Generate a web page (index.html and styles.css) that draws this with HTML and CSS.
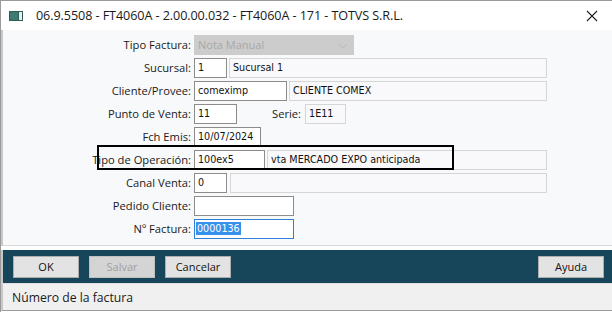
FILE: index.html
```html
<!DOCTYPE html>
<html>
<head>
<meta charset="utf-8">
<link rel="stylesheet" href="styles.css">
</head>
<body>
<div class="window">
  <div class="titlebar">
    <svg class="appicon" width="14" height="10" viewBox="0 0 14 10">
      <rect x="0" y="0" width="14" height="10" fill="#2f5f5a"/>
      <rect x="1" y="1" width="8" height="8" fill="#3e7a72"/>
      <rect x="10" y="1" width="3" height="8" fill="#e8ecea"/>
    </svg>
    <span class="title">06.9.5508 - FT4060A - 2.00.00.032 - FT4060A - 171 - TOTVS S.R.L.</span>
    <svg class="close" width="12" height="12" viewBox="0 0 12 12">
      <path d="M1 1 L11 11 M11 1 L1 11" stroke="#222" stroke-width="1.1" fill="none"/>
    </svg>
  </div>
  <div class="content">
    <div class="row">
      <span class="label">Tipo Factura:</span>
      <div class="field disabled w160">Nota Manual
        <svg class="chev" width="10" height="6" viewBox="0 0 10 6"><path d="M1 1 L5 5 L9 1" stroke="#b8b8b8" fill="none"/></svg>
      </div>
    </div>
    <div class="row">
      <span class="label">Sucursal:</span>
      <div class="field w33">1</div>
      <div class="field light grow">Sucursal 1</div>
    </div>
    <div class="row">
      <span class="label">Cliente/Provee:</span>
      <div class="field w93">comeximp</div>
      <div class="field light grow">CLIENTE COMEX</div>
    </div>
    <div class="row">
      <span class="label">Punto de Venta:</span>
      <div class="field w43">11</div>
      <span class="sublabel">Serie:</span>
      <div class="field light w41">1E11</div>
    </div>
    <div class="row">
      <span class="label">Fch Emis:</span>
      <div class="field w67">10/07/2024</div>
    </div>
    <div class="row highlight-row">
      <span class="label">Tipo de Operación:</span>
      <div class="field w71">100ex5</div>
      <div class="field light grow">vta MERCADO EXPO anticipada</div>
      <div class="hl-box"></div>
    </div>
    <div class="row">
      <span class="label">Canal Venta:</span>
      <div class="field w33">0</div>
      <div class="field light grow gap3"></div>
    </div>
    <div class="row">
      <span class="label">Pedido Cliente:</span>
      <div class="field w100"></div>
    </div>
    <div class="row">
      <span class="label">Nº Factura:</span>
      <div class="field focus w100"><span class="sel">0000136</span></div>
    </div>
  </div>
  <div class="spacer"></div>
  <div class="buttonbar">
    <button class="btn">OK</button>
    <button class="btn dis">Salvar</button>
    <button class="btn">Cancelar</button>
    <span class="fill"></span>
    <button class="btn ayuda">Ayuda</button>
  </div>
  <div class="status">Número de la factura</div>
</div>
</body>
</html>
```

FILE: styles.css
```css
* { box-sizing: border-box; }
html, body { margin: 0; padding: 0; }
body {
  width: 612px;
  height: 312px;
  overflow: hidden;
  background: #ffffff;
  font-family: "Open Sans", "Noto Sans", sans-serif;
}
.window {
  width: 612px;
  height: 312px;
  border-left: 1px solid #9a9a9a;
  border-top: 1px solid #9a9a9a;
  display: flex;
  flex-direction: column;
}
.titlebar {
  height: 29px;
  background: #ffffff;
  display: flex;
  align-items: center;
  padding-left: 8px;
  padding-right: 14px;
}
.appicon { margin-right: 13px; }
.title {
  font-size: 12.6px;
  color: #1a1a1a;
  flex: 1;
  letter-spacing: -0.08px;
}
.close { margin-top: 1px; }
.content {
  height: 216px;
  background: #f8f9fb;
  border-left: 2px solid #c8c8c8;
  border-bottom: 1px solid #d8d8d8;
  padding-top: 3px;
  padding-right: 65px;
}
.row {
  height: 23px;
  display: flex;
  align-items: center;
  position: relative;
}
.label {
  width: 191px;
  text-align: right;
  padding-right: 3px;
  font-size: 11.2px;
  color: #1a1a1a;
  flex: none;
}
.sublabel {
  margin-left: 35px;
  margin-right: 2px;
  font-size: 11.2px;
  color: #1a1a1a;
}
.field {
  height: 20px;
  border: 1px solid #8c8c8c;
  background: #ffffff;
  font-family: "DejaVu Sans", Verdana, sans-serif;
  font-size: 9.6px;
  color: #111;
  padding-left: 3px;
  display: flex;
  align-items: center;
  flex: none;
  position: relative;
}
.field.light {
  border-color: #d6d6d6;
  background: #f9f9fb;
  margin-left: 2px;
}
.field.grow { flex: 1; }
.field.gap3 { margin-left: 3px; }
.field.disabled {
  background: #cccccc;
  border-color: #cccccc;
  color: #a8a8a8;
  font-family: "Open Sans", "Noto Sans", sans-serif;
  font-size: 11px;
}
.chev { position: absolute; right: 5px; top: 7px; }
.field.focus { border-color: #2f7fd8; padding-left: 1px; }
.sel { background: #3591ea; color: #ffffff; padding: 1px 1px; }
.w160 { width: 160px; }
.w33 { width: 33px; }
.w93 { width: 93px; }
.w43 { width: 43px; }
.w41 { width: 41px; }
.w67 { width: 67px; }
.w71 { width: 71px; }
.w100 { width: 100px; }
.hl-box {
  position: absolute;
  left: 94px;
  top: -3px;
  width: 357px;
  height: 25px;
  border: 2px solid #000;
  pointer-events: none;
}
.spacer {
  height: 4px;
  background: #ffffff;
}
.buttonbar {
  height: 33px;
  background: #17465a;
  display: flex;
  align-items: center;
  padding-left: 10px;
  padding-right: 8px;
  gap: 10px;
  border-left: 2px solid #c8c8c8;
}
.btn {
  width: 66px;
  height: 22px;
  background: #e3e3e3;
  border: 1px solid #adadad;
  font-family: "Open Sans", "Noto Sans", sans-serif;
  font-size: 11px;
  color: #111;
  padding: 0;
}
.btn.dis { color: #a0a0a0; background: #d4d4d4; border-color: #c0c0c0; }
.fill { flex: 1; }
.status {
  height: 28px;
  background: #f0f0f0;
  border-top: 1px solid #e0e0e0;
  border-bottom: 1px solid #9a9a9a;
  border-left: 2px solid #c8c8c8;
  padding-left: 9px;
  display: flex;
  align-items: center;
  font-size: 12.2px;
  color: #1a1a1a;
}
```
